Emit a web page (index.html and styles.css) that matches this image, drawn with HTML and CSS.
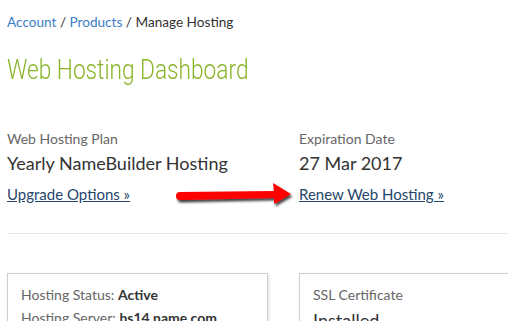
FILE: index.html
```html
<!DOCTYPE html>
<html lang="en">
<head>
  <meta charset="UTF-8" />
  <title>Manage Hosting</title>
  <link rel="stylesheet" href="styles.css">
</head>
<body>
  <div class="page">
    <nav class="crumbs">
      <a href="#">Account</a> / <a href="#">Products</a> / <span>Manage Hosting</span>
    </nav>

    <h1 class="title">Web Hosting Dashboard</h1>

    <div class="summary">
      <div class="item">
        <div class="label">Web Hosting Plan</div>
        <div class="value">Yearly NameBuilder Hosting</div>
        <a class="action" href="#">Upgrade Options &raquo;</a>
      </div>
      <div class="item">
        <div class="label">Expiration Date</div>
        <div class="value">27 Mar 2017</div>
        <a class="action" href="#">Renew Web Hosting &raquo;</a>
      </div>

      <svg class="arrow" width="132" height="30" viewBox="0 0 132 30">
        <defs>
          <filter id="sh" x="-10%" y="-30%" width="130%" height="180%">
            <feDropShadow dx="1.5" dy="2.5" stdDeviation="1.2" flood-color="#000" flood-opacity="0.75"/>
          </filter>
        </defs>
        <path filter="url(#sh)" fill="#f00" d="M10 10 L104 9 L103 1 L121 12 L104 22 L104 16 L10 18 A4 4 0 0 1 10 10 Z"/>
      </svg>
    </div>

    <hr class="rule">

    <div class="cards">
      <div class="card">
        <p class="line">Hosting Status: <b>Active</b></p>
        <p class="line">Hosting Server: <b>hs14.name.com</b></p>
      </div>
      <div class="card">
        <div class="label">SSL Certificate</div>
        <div class="value">Installed</div>
      </div>
    </div>
  </div>
</body>
</html>
```

FILE: styles.css
```css
body {
  margin: 0;
  font-family: 'Lato', sans-serif;
  background: #fff;
  color: #333;
  overflow: hidden;
}

.page {
  padding: 14px 0 0 7px;
  width: 560px;
}

.crumbs {
  font-size: 13.6px;
  color: #333;
}

.crumbs a {
  color: #3b7dc4;
  text-decoration: none;
}

.title {
  margin: 23px 0 0;
  font-family: 'Roboto', sans-serif;
  font-weight: 300;
  font-size: 28px;
  color: #8ab52a;
  transform: scaleX(0.81);
  transform-origin: left;
}

.summary {
  position: relative;
  display: grid;
  grid-template-columns: 292px 1fr;
  margin-top: 44px;
}

.label {
  font-size: 14px;
  color: #666;
}

.value {
  font-size: 18px;
  color: #333;
  margin-top: 5px;
}

.action {
  display: inline-block;
  margin-top: 11px;
  font-size: 15px;
  color: #25466c;
}

.arrow {
  position: absolute;
  left: 163px;
  top: 52px;
}

.rule {
  border: 0;
  border-top: 1px solid #e6e6e6;
  margin: 30px 0 0;
}

.cards {
  display: grid;
  grid-template-columns: 261px 261px;
  gap: 31px;
  margin-top: 39px;
}

.card {
  border: 1px solid #d0d0d0;
  box-shadow: 1px 1px 3px rgba(0, 0, 0, 0.12);
  padding: 12px 13px;
  height: 120px;
}

.card .value {
  margin-top: 6px;
}

.line {
  margin: 0 0 6px;
  font-size: 14px;
  color: #666;
}

.line b {
  color: #333;
}
```
